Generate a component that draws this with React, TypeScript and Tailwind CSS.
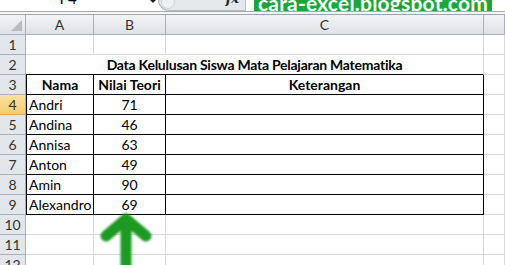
import React from 'react';

const font = "font-['Lato','Liberation_Sans',sans-serif]";

const rows = [
  { nama: 'Andri', nilai: '71' },
  { nama: 'Andina', nilai: '46' },
  { nama: 'Annisa', nilai: '63' },
  { nama: 'Anton', nilai: '49' },
  { nama: 'Amin', nilai: '90' },
  { nama: 'Alexandro', nilai: '69' },
];

const grid = 'border-r border-b border-[#d9dadc]';
const black = 'border-r border-b border-black';
const hdr = 'border-r border-b border-[#aab0b8] bg-gradient-to-b from-[#f3f4f6] to-[#dee2e7] text-[#333] justify-center';
const rowHdr = 'border-r border-b border-[#aab0b8] bg-[#e3e6ea] text-[#333] justify-center';
const rowSel = 'border-r border-b border-[#e8a84a] bg-gradient-to-b from-[#f9e2a0] to-[#f6cc6a] text-[#333] justify-center';

const Cell: React.FC<{ className?: string; children?: React.ReactNode }> = ({ className = '', children }) => (
  <div className={`flex items-end pb-[2px] overflow-hidden whitespace-nowrap ${className}`}>
    <span className="leading-[14px]">{children}</span>
  </div>
);

const App: React.FC = () => {
  return (
    <div className={`w-[505px] h-[265px] overflow-hidden bg-white relative text-[14px] text-black ${font}`}>
      {/* formula bar strip, cut at top */}
      <div className="flex h-[11px] overflow-hidden bg-white">
        <div className="w-[136px] flex justify-center">
          <span className="text-[15px] leading-[15px] -mt-[9px] text-black">F4</span>
        </div>
        <div className="w-[12px]" />
        <div className="w-[10px] flex justify-center">
          <span className="block w-0 h-0 border-l-[3px] border-r-[3px] border-t-[3px] border-l-transparent border-r-transparent border-t-[#222]" />
        </div>
        <div className="w-[87px] flex items-stretch bg-[#e4e7eb] border-l border-b border-[#b4bac1] rounded-bl-[11px] -mt-[4px] pt-[4px]">
          <div className="w-[14px] h-[14px] -mt-[5px] ml-[2px] rounded-full bg-[#eef0f2] border border-[#cfd3d8]" />
          <div className="flex-1" />
          <span className="text-[13px] italic font-semibold leading-[13px] -mt-[8px] mr-[6px] text-[#222] font-['DejaVu_Serif',serif]">fx</span>
        </div>
        <div className="w-px bg-[#b9bec4]" />
        <div className="w-[8px]" />
        <div className="w-[238px] bg-[#1ba63a] flex justify-center overflow-hidden">
          <span className="text-white font-bold text-[21px] leading-[21px] -mt-[8px] tracking-[0.2px]">cara-excel.blogspot.com</span>
        </div>
        <div className="flex-1" />
      </div>
      <div className="h-px bg-[#a7abb0]" />
      <div className="h-[2px] bg-[#f6f7f8]" />

      {/* sheet */}
      <div className="grid grid-cols-[26px_68px_72px_318px_1fr] auto-rows-[20px] border-t border-[#9ea4ab]">
        <div className={`${hdr} relative`}>
          <svg className="absolute right-[3px] bottom-[3px]" width="11" height="11" viewBox="0 0 11 11">
            <polygon points="11,0 11,11 0,11" fill="#b8bdc4" />
          </svg>
        </div>
        <Cell className={hdr}>A</Cell>
        <Cell className={hdr}>B</Cell>
        <Cell className={hdr}>C</Cell>
        <Cell className={hdr}></Cell>

        {/* row 1 */}
        <Cell className={rowHdr}>1</Cell>
        <Cell className={grid}></Cell>
        <Cell className={grid}></Cell>
        <Cell className={grid}></Cell>
        <Cell className={grid}></Cell>

        {/* row 2 */}
        <Cell className={rowHdr}>2</Cell>
        <Cell className="col-span-3 border-r border-r-[#d9dadc] border-b border-b-black justify-center font-bold tracking-[-0.25px]">
          Data Kelulusan Siswa Mata Pelajaran Matematika
        </Cell>
        <Cell className={grid}></Cell>

        {/* row 3 */}
        <Cell className={rowHdr}>3</Cell>
        <Cell className={`${black} border-l justify-center font-bold`}>Nama</Cell>
        <Cell className={`${black} justify-center font-bold`}>Nilai Teori</Cell>
        <Cell className={`${black} justify-center font-bold`}>Keterangan</Cell>
        <Cell className={grid}></Cell>

        {rows.map((r, i) => (
          <React.Fragment key={r.nama}>
            <Cell className={i === 0 ? rowSel : rowHdr}>{i + 4}</Cell>
            <Cell className={`${black} border-l pl-[2px]`}>{r.nama}</Cell>
            <Cell className={`${black} justify-center`}>{r.nilai}</Cell>
            <Cell className={black}></Cell>
            <Cell className={grid}></Cell>
          </React.Fragment>
        ))}

        {[10, 11, 12].map((n) => (
          <React.Fragment key={n}>
            <Cell className={rowHdr}>{n}</Cell>
            <Cell className={grid}></Cell>
            <Cell className={grid}></Cell>
            <Cell className={grid}></Cell>
            <Cell className={grid}></Cell>
          </React.Fragment>
        ))}
      </div>

      {/* green arrow drawn on the screenshot */}
      <svg className="absolute left-[90px] top-[200px]" width="72" height="65" viewBox="0 0 72 65">
        <defs>
          <filter id="soft" x="-20%" y="-20%" width="140%" height="140%">
            <feGaussianBlur stdDeviation="1.3" />
          </filter>
        </defs>
        <g filter="url(#soft)" stroke="#1e9a24" strokeWidth="11" strokeLinecap="round" strokeLinejoin="round" fill="none">
          <polyline points="16,36 36,19 56,36" />
          <line x1="36" y1="20" x2="36" y2="80" />
        </g>
      </svg>
    </div>
  );
};

export default App;
